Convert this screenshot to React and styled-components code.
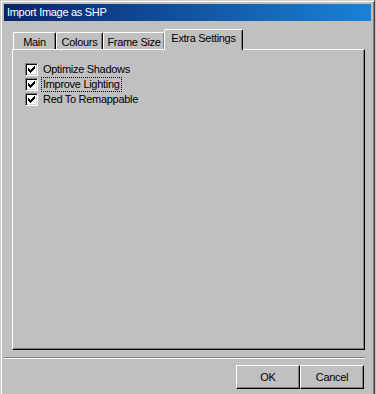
import styled, { createGlobalStyle } from "styled-components";

const Global = createGlobalStyle`
  html, body {
    margin: 0;
    padding: 0;
    overflow: hidden;
    background: #c0c0c0;
  }
  * {
    box-sizing: border-box;
  }
`;

const tabs = [
  { label: "Main", w: 43 },
  { label: "Colours", w: 47 },
  { label: "Frame Size", w: 62 },
  { label: "Extra Settings", w: 79, active: true },
];

const options = [
  { label: "Optimize Shadows" },
  { label: "Improve Lighting", focus: true },
  { label: "Red To Remappable" },
];

function Check() {
  // classic 7x7 pixel tick
  const cols = [2, 3, 4, 3, 2, 1, 0];
  return (
    <svg width="7" height="7" viewBox="0 0 7 7" shapeRendering="crispEdges">
      {cols.map((y, x) => (
        <rect key={x} x={x} y={y} width="1" height="3" fill="#000" />
      ))}
    </svg>
  );
}

export default function App() {
  return (
    <>
      <Global />
      <Window>
        <TitleBar>Import Image as SHP</TitleBar>
        <Content>
          <TabRow>
            {tabs.map((t) => (
              <Tab key={t.label} $w={t.w} $active={t.active}>
                {t.label}
              </Tab>
            ))}
          </TabRow>
          <Panel>
            {options.map((o) => (
              <Row key={o.label}>
                <Box>
                  <Check />
                </Box>
                <Label $focus={o.focus}>{o.label}</Label>
              </Row>
            ))}
          </Panel>
        </Content>
        <Separator />
        <Buttons>
          <Button>OK</Button>
          <Button>Cancel</Button>
        </Buttons>
      </Window>
    </>
  );
}

const Window = styled.div`
  width: 375px;
  height: 394px;
  overflow: hidden;
  background: #c0c0c0;
  border: 1px solid;
  border-bottom: none;
  border-color: #d4d0c8 #404040 #404040 #d4d0c8;
  box-shadow: inset 1px 1px 0 #fff, inset -1px 0 0 #808080;
  padding: 3px 3px 0 3px;
  display: flex;
  flex-direction: column;
  font-family: "Liberation Sans", Arial, sans-serif;
  font-size: 11px;
  letter-spacing: -0.3px;
  color: #000;
`;

const TitleBar = styled.div`
  flex: none;
  height: 17px;
  line-height: 16px;
  padding-left: 3px;
  color: #fff;
  background: linear-gradient(to right, #0a246a, #1a82d6);
  white-space: nowrap;
`;

const Content = styled.div`
  flex: none;
  margin: 8px 6px 0 8px;
  display: flex;
  flex-direction: column;
`;

const TabRow = styled.div`
  display: flex;
  align-items: flex-end;
  height: 20px;
  padding-left: 1px;
  position: relative;
  z-index: 1;
`;

const Tab = styled.div`
  width: ${({ $w }) => $w}px;
  height: ${({ $active }) => ($active ? 21 : 17)}px;
  margin: ${({ $active }) => ($active ? "0 -1px -1px -1px" : "0")};
  padding-top: ${({ $active }) => ($active ? 2 : 3)}px;
  text-align: center;
  line-height: 12px;
  background: #c0c0c0;
  border-top: 1px solid #fff;
  border-left: 1px solid #fff;
  border-right: 1px solid #000;
  border-radius: 2px 2px 0 0;
  box-shadow: inset -1px 0 0 #808080;
  white-space: nowrap;
`;

const Panel = styled.div`
  height: 301px;
  padding: 12px 0 0 12px;
  border: 1px solid;
  border-color: #fff #000 #000 #fff;
  box-shadow: inset -1px -1px 0 #808080;
  display: flex;
  flex-direction: column;
`;

const Row = styled.div`
  display: flex;
  align-items: center;
  height: 15px;
`;

const Box = styled.div`
  width: 13px;
  height: 13px;
  background: #fff;
  border: 1px solid;
  border-color: #808080 #fff #fff #808080;
  box-shadow: inset 1px 1px 0 #000, inset -1px -1px 0 #d4d0c8;
  display: flex;
  align-items: center;
  justify-content: center;
`;

const Label = styled.span`
  margin-left: 3px;
  padding: 0 2px;
  height: 15px;
  line-height: 15px;
  white-space: nowrap;
  outline: ${({ $focus }) => ($focus ? "1px dotted #000" : "none")};
  outline-offset: -1px;
`;

const Separator = styled.div`
  flex: none;
  margin: 7px 6px 0 0;
  height: 2px;
  border-top: 1px solid #808080;
  border-bottom: 1px solid #fff;
`;

const Buttons = styled.div`
  flex: none;
  display: flex;
  justify-content: flex-end;
  margin: 6px 7px 0 0;
`;

const Button = styled.button`
  width: 64px;
  height: 24px;
  padding: 0;
  font: inherit;
  letter-spacing: inherit;
  color: #000;
  background: #c0c0c0;
  border: 1px solid;
  border-color: #fff #000 #000 #fff;
  box-shadow: inset -1px -1px 0 #808080;
  cursor: pointer;
`;
